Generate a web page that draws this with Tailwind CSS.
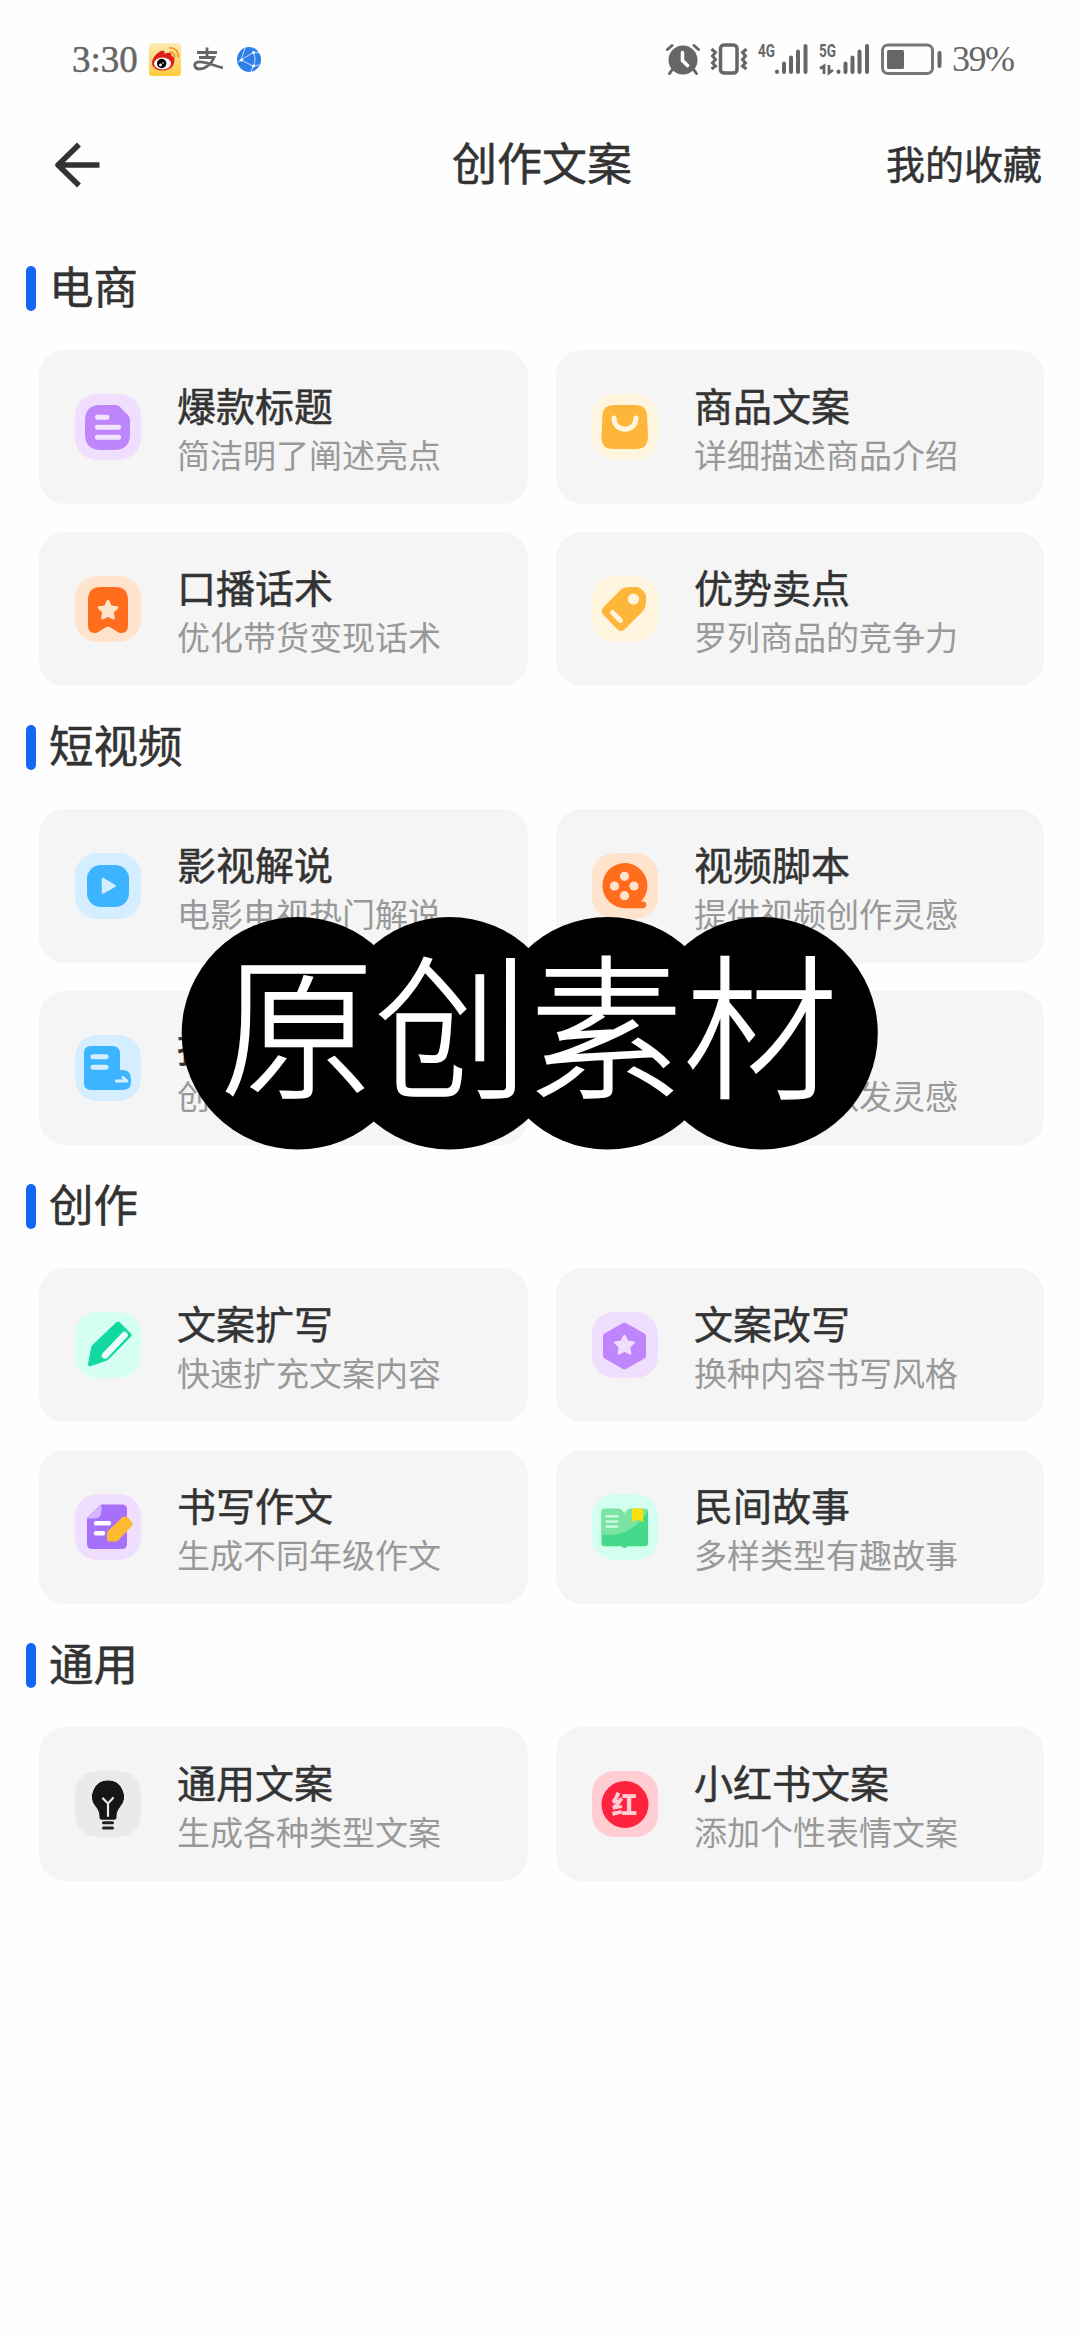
<!DOCTYPE html>
<html lang="zh-CN">
<head>
<meta charset="utf-8">
<title>创作文案</title>
<script src="https://cdn.jsdelivr.net/npm/@tailwindcss/browser@4"></script>
</head>
<body class="relative h-[2339px] w-[1080px] overflow-hidden bg-[#fefefe] font-['Noto_Sans_CJK_SC','Noto_Sans',sans-serif] text-[#333]">

<!-- Status bar -->
<header class="flex h-[116px] items-center justify-between pt-0.5 pr-[66px] pl-[72px] text-[#666]">
  <div class="flex items-center">
    <span class="w-[77px] font-['Liberation_Serif',serif] text-[37px] leading-none [-webkit-text-stroke:0.5px_#666]">3:30</span>
    <svg class="mr-3 h-[33px] w-8" viewBox="0 0 32 33">
      <defs><linearGradient id="wb" x1="0" y1="0" x2="0" y2="1"><stop offset="0" stop-color="#fdeab8"/><stop offset="1" stop-color="#fccb3c"/></linearGradient></defs>
      <rect width="32" height="33" rx="3" fill="url(#wb)"/>
      <path d="M3 20C3 14 11 6 15 8c1 .8.5 2 .5 3 3-2 8-2 7 2 3 1 3.500 3 2.500 7-1 5-7 8-13 7.500C7 27 3 24 3 20z" fill="#dd1f1a"/>
      <ellipse cx="13.500" cy="20.500" rx="8.500" ry="6" fill="#fff"/>
      <circle cx="12.700" cy="20.500" r="4.700" fill="#000"/>
      <circle cx="11.500" cy="22" r="1.400" fill="#fff"/><circle cx="14" cy="20" r=".8" fill="#fff"/>
      <path d="M21 5c5-.5 9 4 8 9M21 9c3 0 5 2 4.500 5" fill="none" stroke="#f59a23" stroke-width="1.800" stroke-linecap="round"/>
    </svg>
    <svg class="mr-3.5 h-6 w-[30px]" viewBox="0 0 30 24" fill="none" stroke="#666" stroke-width="2.800">
      <path d="M4 5.500h20M14 .5v10M6 10.500h15c-2 5-7 11-14.500 11.500C1 22 0 16 5 15c7-1 15 3.500 25 6"/>
    </svg>
    <svg class="h-[25px] w-6" viewBox="0 0 24 25">
      <ellipse cx="12" cy="12.500" rx="12" ry="12.500" fill="#2f7fe9"/>
      <g fill="none" stroke="#fff" stroke-opacity=".8" stroke-width=".9"><path d="M4 13L16 5.500M4 13l12 6M16.500 6c2 4 2 8 0 13M1 15l3-2 4-12M16 5l7 1M16 19l-2 6M16 19l6-1"/></g>
      <g fill="#fff"><circle cx="4.500" cy="13" r="1.500"/><circle cx="16.500" cy="5.500" r="1.500"/><circle cx="16.500" cy="19" r="1.500"/></g>
    </svg>
  </div>
  <div class="flex items-center">
    <svg class="mr-2.5 h-8 w-[34px]" viewBox="0 0 34 32">
      <circle cx="17" cy="17" r="14.500" fill="#666"/>
      <g fill="none" stroke="#666" stroke-width="3" stroke-linecap="round"><path d="M1.500 6.500L6 2.500M32.500 6.500L28 2.500M6 27l-2.500 3.500M28 27l2.500 3.500"/></g>
      <path d="M16.500 9.500v8l5 5" fill="none" stroke="#fefefe" stroke-width="3.600" stroke-linecap="round"/>
    </svg>
    <svg class="mr-2.5 h-8 w-[38px]" viewBox="0 0 38 32" fill="none" stroke="#666">
      <rect x="10.500" y="2" width="16.500" height="28" rx="3.500" stroke-width="3.500"/>
      <path d="M1.500 6l4 3.500-3 3.500 3 3.500-3 3.500 3 3L1.500 26M36.500 6l-4 3.500 3 3.500-3 3.500 3 3.500-3 3 4 3" stroke-width="3"/>
    </svg>
    <svg class="mr-[11px] h-8 w-[50px] overflow-visible" viewBox="0 0 50 32" fill="none" stroke="#666">
      <text x="0" y="14" fill="#666" stroke="none" font-family="Roboto" font-weight="700" font-size="18.500" textLength="17" lengthAdjust="spacingAndGlyphs">4G</text>
      <path d="M19 28.500v.5M26 20.500V29M33 14.500V29M40 8.500V29M47.500 3V29" stroke-width="4" stroke-linecap="round"/>
    </svg>
    <svg class="mr-[11px] h-8 w-[51px] overflow-visible" viewBox="0 0 51 32" fill="none" stroke="#666">
      <text x="0" y="14" fill="#666" stroke="none" font-family="Roboto" font-weight="700" font-size="18.500" textLength="17" lengthAdjust="spacingAndGlyphs">5G</text>
      <path d="M5 31V23l-4 2.500M10 22v8l4-3" stroke-width="2.800"/>
      <path d="M19.500 28.500v.5M26.500 20.500V29M33.500 14.500V29M40.500 8.500V29M48 3V29" stroke-width="4" stroke-linecap="round"/>
    </svg>
    <svg class="mr-2.5 h-8 w-[61px]" viewBox="0 0 61 32">
      <rect x="1.500" y="2" width="50" height="28.500" rx="5.500" fill="none" stroke="#777" stroke-width="3"/>
      <rect x="6" y="7" width="17" height="19" rx="1.500" fill="#666"/>
      <rect x="56.500" y="8" width="4" height="17" rx="2" fill="#666"/>
    </svg>
    <span class="w-[62px] font-['Liberation_Serif',serif] text-[36px] leading-none tracking-[-1.500px]">39%</span>
  </div>
</header>

<!-- Title bar -->
<nav class="grid h-[98px] grid-cols-[1fr_auto_1fr] items-center pr-[50px] pl-[54px]">
  <svg class="size-[46px]" viewBox="0 0 46 46" fill="none" stroke="#333" stroke-width="5.500" stroke-linejoin="round"><path d="M45.500 23H4M25 2.500L4 23 25 43.500"/></svg>
  <h1 class="pb-[7px] text-[45px] leading-none [-webkit-text-stroke:0.5px_#333]">创作文案</h1>
  <a class="-mr-3 justify-self-end pb-[5px] text-[39px] leading-none [-webkit-text-stroke:0.5px_#333]">我的收藏</a>
</nav>

<main>
  <!-- 电商 -->
  <section class="h-[459px] pt-[52px]">
    <h2 class="flex h-[45px] items-center gap-[13px] pl-[26px] text-[44.500px] leading-none [-webkit-text-stroke:0.5px_#333]"><i class="h-[45px] w-2.5 rounded-full bg-[#1467f5]"></i><span class="pb-1.5">电商</span></h2>
    <div class="mt-[39px] grid grid-cols-[489px_488px] gap-x-[28px] gap-y-7 pl-[39px]">
      <article class="flex h-[154px] items-center rounded-[26px] bg-[#f5f5f5] pl-9">
        <svg class="mr-[36px] size-[66px] rounded-[22px] bg-[#efdefe]" viewBox="0 0 66 66"><path d="M25 11h16q3 0 5 3l7 7q2 2 2 5v14q0 16-16 16H26Q10 56 10 40V27Q10 11 25 11z" fill="#be85fd"/><path d="M22.500 23.300H32M22.500 33.300h21M22.500 43.300h21" stroke="#f3e4fe" stroke-width="5" stroke-linecap="round"/></svg>
        <div class="pt-[3px]"><h3 class="text-[39px] leading-[50px] [-webkit-text-stroke:0.5px_#333]">爆款标题</h3><p class="text-[33px] leading-[50px] text-[#999]">简洁明了阐述亮点</p></div>
      </article>
      <article class="flex h-[154px] items-center rounded-[26px] bg-[#f5f5f5] pl-9">
        <svg class="mr-[36px] size-[66px] rounded-[22px] bg-[#fff5de]" viewBox="0 0 66 66"><path d="M22 11h22q10 0 11 10l1 21q0 13-12 13H21Q9 55 9.500 42l1-21Q11 11 22 11z" fill="#fdb63a"/><path d="M22 24c0 15 22 15 22 0" fill="none" stroke="#fff5de" stroke-width="5" stroke-linecap="round"/></svg>
        <div class="pt-[3px]"><h3 class="text-[39px] leading-[50px] [-webkit-text-stroke:0.5px_#333]">商品文案</h3><p class="text-[33px] leading-[50px] text-[#999]">详细描述商品介绍</p></div>
      </article>
      <article class="flex h-[154px] items-center rounded-[26px] bg-[#f5f5f5] pl-9">
        <svg class="mr-[36px] size-[66px] rounded-[22px] bg-[#ffe3cd]" viewBox="0 0 66 66"><path d="M26 11h14q13 0 13 13v25q0 8-6.500 8-2.500 0-4.500-1.500l-6-3.800q-3-2-6 0l-6 3.800Q22 57 19.500 57 13 57 13 49V24Q13 11 26 11z" fill="#ff6d1d"/><path d="M33 25l2.800 5.700 6.300.9-4.600 4.400 1.100 6.300L33 39.400l-5.600 2.900 1.100-6.300-4.600-4.400 6.300-.9z" fill="#ffe3cd" stroke="#ffe3cd" stroke-width="2.500" stroke-linejoin="round"/></svg>
        <div class="pt-[3px]"><h3 class="text-[39px] leading-[50px] [-webkit-text-stroke:0.5px_#333]">口播话术</h3><p class="text-[33px] leading-[50px] text-[#999]">优化带货变现话术</p></div>
      </article>
      <article class="flex h-[154px] items-center rounded-[26px] bg-[#f5f5f5] pl-9">
        <svg class="mr-[36px] size-[66px] rounded-[22px] bg-[#fff5de]" viewBox="0 0 66 66"><path d="M32 12q3-1 7-1h5q4 0 6 3 4 3 4 7v6q0 4-3 8L33 53q-4 4-8 0L11.500 39q-3.500-3.500 0-8L28 14.500q1.500-2 4-2.500z" fill="#fdb63a"/><circle cx="41.500" cy="23" r="5.600" fill="#fff5de"/><path d="M20.500 36.500l8 8" stroke="#fff5de" stroke-width="5" stroke-linecap="round"/></svg>
        <div class="pt-[3px]"><h3 class="text-[39px] leading-[50px] [-webkit-text-stroke:0.5px_#333]">优势卖点</h3><p class="text-[33px] leading-[50px] text-[#999]">罗列商品的竞争力</p></div>
      </article>
    </div>
  </section>

  <!-- 短视频 -->
  <section class="h-[459px] pt-[52px]">
    <h2 class="flex h-[45px] items-center gap-[13px] pl-[26px] text-[44.500px] leading-none [-webkit-text-stroke:0.5px_#333]"><i class="h-[45px] w-2.5 rounded-full bg-[#1467f5]"></i><span class="pb-1.5">短视频</span></h2>
    <div class="mt-[39px] grid grid-cols-[489px_488px] gap-x-[28px] gap-y-7 pl-[39px]">
      <article class="flex h-[154px] items-center rounded-[26px] bg-[#f5f5f5] pl-9">
        <svg class="mr-[36px] size-[66px] rounded-[22px] bg-[#d4edff]" viewBox="0 0 66 66"><rect x="12" y="12" width="42" height="42" rx="14" fill="#3cb4ff"/><path d="M28 26v13.500l11.500-6.700z" fill="#d4edff" stroke="#d4edff" stroke-width="2.500" stroke-linejoin="round"/></svg>
        <div class="pt-[3px]"><h3 class="text-[39px] leading-[50px] [-webkit-text-stroke:0.5px_#333]">影视解说</h3><p class="text-[33px] leading-[50px] text-[#999]">电影电视热门解说</p></div>
      </article>
      <article class="flex h-[154px] items-center rounded-[26px] bg-[#f5f5f5] pl-9">
        <svg class="mr-[36px] size-[66px] rounded-[22px] bg-[#ffe3cd]" viewBox="0 0 66 66"><path d="M33 10a22.700 22.700 0 0 1 16 38.500h2.500a3.400 3.400 0 0 1 0 6.700H33A22.600 22.600 0 0 1 33 10z" fill="#ff6d1d"/><g fill="#ffe3cd"><circle cx="32.500" cy="23.300" r="4.600"/><circle cx="22.500" cy="33" r="4.600"/><circle cx="42" cy="33" r="4.600"/><circle cx="32.500" cy="42.700" r="4.600"/></g></svg>
        <div class="pt-[3px]"><h3 class="text-[39px] leading-[50px] [-webkit-text-stroke:0.5px_#333]">视频脚本</h3><p class="text-[33px] leading-[50px] text-[#999]">提供视频创作灵感</p></div>
      </article>
      <article class="flex h-[154px] items-center rounded-[26px] bg-[#f5f5f5] pl-9">
        <svg class="mr-[36px] size-[66px] rounded-[22px] bg-[#d4edff]" viewBox="0 0 66 66"><path d="M16 11h21q8 0 8 8v16h2q9 0 9 9v3q0 8-9 8H16q-7 0-7-7V18q0-7 7-7z" fill="#3cb4ff"/><path d="M18 21.700h13M18 32.200h13" stroke="#d4edff" stroke-width="5" stroke-linecap="round"/><path d="M40 46h12l-5-4.500" fill="none" stroke="#d4edff" stroke-width="2.800" stroke-linejoin="round"/></svg>
        <div class="pt-[3px]"><h3 class="text-[39px] leading-[50px] [-webkit-text-stroke:0.5px_#333]">拍</h3><p class="text-[33px] leading-[50px] text-[#999]">创</p></div>
      </article>
      <article class="flex h-[154px] items-center rounded-[26px] bg-[#f5f5f5] pl-9">
        <div class="mr-[36px] size-[66px]"></div>
        <div class="pt-[53px] pl-[132px]"><p class="text-[33px] leading-[50px] text-[#999]">激发灵感</p></div>
      </article>
    </div>
  </section>

  <!-- 创作 -->
  <section class="h-[459px] pt-[52px]">
    <h2 class="flex h-[45px] items-center gap-[13px] pl-[26px] text-[44.500px] leading-none [-webkit-text-stroke:0.5px_#333]"><i class="h-[45px] w-2.5 rounded-full bg-[#1467f5]"></i><span class="pb-1.5">创作</span></h2>
    <div class="mt-[39px] grid grid-cols-[489px_488px] gap-x-[28px] gap-y-7 pl-[39px]">
      <article class="flex h-[154px] items-center rounded-[26px] bg-[#f5f5f5] pl-9">
        <svg class="mr-[36px] size-[66px] rounded-[22px] bg-[#d6fff3]" viewBox="0 0 66 66"><path d="M41 10.500q2-2 4 0l11 11q1.500 1.500 0 3L34 47q-1.500 1.500-3.500 2L16 54q-3 1-3-2l3-16q.5-2 2-3.500z" fill="#12d8a2"/><path d="M49.500 23L30 43.500" stroke="#e9fff9" stroke-width="6.500" stroke-linecap="round"/></svg>
        <div class="pt-[3px]"><h3 class="text-[39px] leading-[50px] [-webkit-text-stroke:0.5px_#333]">文案扩写</h3><p class="text-[33px] leading-[50px] text-[#999]">快速扩充文案内容</p></div>
      </article>
      <article class="flex h-[154px] items-center rounded-[26px] bg-[#f5f5f5] pl-9">
        <svg class="mr-[36px] size-[66px] rounded-[22px] bg-[#efdefe]" viewBox="0 0 66 66"><path d="M32.500 13.500L51 24v20L32.500 54.500 14 44V24z" fill="#be85fd" stroke="#be85fd" stroke-width="6" stroke-linejoin="round"/><path d="M32.500 24l2.800 5.700 6.300.9-4.600 4.400 1.100 6.300-5.600-2.900-5.600 2.900L28 35l-4.600-4.400 6.300-.9z" fill="#efdefe" stroke="#efdefe" stroke-width="2.500" stroke-linejoin="round"/></svg>
        <div class="pt-[3px]"><h3 class="text-[39px] leading-[50px] [-webkit-text-stroke:0.5px_#333]">文案改写</h3><p class="text-[33px] leading-[50px] text-[#999]">换种内容书写风格</p></div>
      </article>
      <article class="flex h-[154px] items-center rounded-[26px] bg-[#f5f5f5] pl-9">
        <svg class="mr-[36px] size-[66px] rounded-[22px] bg-[#efdefe]" viewBox="0 0 66 66"><path d="M26 10.500h21q5 0 5 5V50q0 5-5 5H17q-5 0-5-5V24z" fill="#a770fb"/><path d="M26.500 10.500v6q0 8-8 8H12z" fill="#d5b8ff"/><path d="M21 29.300h13M21 39.200h7" stroke="#fff" stroke-width="4.400" stroke-linecap="round"/><path d="M47 23.500q3-2 6 0l3 3.500q3 3 0 6L43 46.500q-1 1-3 1h-6q-2 0-2-2V40q0-2 1-3z" fill="#fdba30"/></svg>
        <div class="pt-[3px]"><h3 class="text-[39px] leading-[50px] [-webkit-text-stroke:0.5px_#333]">书写作文</h3><p class="text-[33px] leading-[50px] text-[#999]">生成不同年级作文</p></div>
      </article>
      <article class="flex h-[154px] items-center rounded-[26px] bg-[#f5f5f5] pl-9">
        <svg class="mr-[36px] size-[66px] rounded-[22px] bg-[#d3fff0]" viewBox="0 0 66 66"><clipPath id="bk"><path d="M12.500 14.700H27q2 0 3 2l2.500 2.500 2.500-2.500q1-2 3-2h15q3 0 3 3v31.500q0 3-3 3H36l-3.500 2-3.500-2H12.500q-3 0-3-3V17.700q0-3 3-3z"/></clipPath><g clip-path="url(#bk)"><path d="M0 0h66v66H0z" fill="#45d98b"/><path d="M0 39q30 6 44-8 7-6 12-14V0H0z" fill="#7de3a2"/></g><path d="M14.500 22.300h11M14.500 27.500h11M14.500 32.700h11" stroke="#d6fbe4" stroke-width="2.200" stroke-linecap="round"/><path d="M40 14.500h11V28l-5.500-2.500L40 28z" fill="#ffdf0a"/></svg>
        <div class="pt-[3px]"><h3 class="text-[39px] leading-[50px] [-webkit-text-stroke:0.5px_#333]">民间故事</h3><p class="text-[33px] leading-[50px] text-[#999]">多样类型有趣故事</p></div>
      </article>
    </div>
  </section>

  <!-- 通用 -->
  <section class="h-[459px] pt-[52px]">
    <h2 class="flex h-[45px] items-center gap-[13px] pl-[26px] text-[44.500px] leading-none [-webkit-text-stroke:0.5px_#333]"><i class="h-[45px] w-2.5 rounded-full bg-[#1467f5]"></i><span class="pb-1.5">通用</span></h2>
    <div class="mt-[39px] grid grid-cols-[489px_488px] gap-x-[28px] gap-y-7 pl-[39px]">
      <article class="flex h-[154px] items-center rounded-[26px] bg-[#f5f5f5] pl-9">
        <svg class="mr-[36px] size-[66px] rounded-[22px] bg-[#eaeaea]" viewBox="0 0 66 66"><path d="M33 9.500a16 16 0 0 1 12 26.500q-3.500 4-3.500 10 0 2.700-2.500 2.700H27q-2.500 0-2.500-2.700 0-6-3.500-10A16 16 0 0 1 33 9.500z" fill="#161616"/><path d="M28 27.500l5 5 5-5.500M33 32.500v12.500" fill="none" stroke="#eaeaea" stroke-width="2.200" stroke-linecap="round"/><path d="M28.500 51.700h9M28.500 57h9" stroke="#222" stroke-width="3" stroke-linecap="round"/></svg>
        <div class="pt-[3px]"><h3 class="text-[39px] leading-[50px] [-webkit-text-stroke:0.5px_#333]">通用文案</h3><p class="text-[33px] leading-[50px] text-[#999]">生成各种类型文案</p></div>
      </article>
      <article class="flex h-[154px] items-center rounded-[26px] bg-[#f5f5f5] pl-9">
        <svg class="mr-[36px] size-[66px] rounded-[22px] bg-[#ffcdd2]" viewBox="0 0 66 66"><circle cx="33" cy="33.500" r="23.500" fill="#ff2340"/><text x="32.500" y="43" text-anchor="middle" font-size="25.500" font-weight="900" fill="#ffcdd2">红</text></svg>
        <div class="pt-[3px]"><h3 class="text-[39px] leading-[50px] [-webkit-text-stroke:0.5px_#333]">小红书文案</h3><p class="text-[33px] leading-[50px] text-[#999]">添加个性表情文案</p></div>
      </article>
    </div>
  </section>
</main>

<!-- Watermark lying over the list -->
<div class="absolute top-[917px] left-[181px] h-[233px] w-[698px]">
  <svg class="absolute inset-0" width="698" height="233" viewBox="0 0 698 233"><circle cx="117" cy="116.300" r="116.300"/><circle cx="268.500" cy="116.300" r="116.300"/><circle cx="426.500" cy="116.300" r="116.300"/><circle cx="580.500" cy="116.300" r="116.300"/></svg>
  <div class="absolute top-[25px] left-[39px] text-[154.500px] leading-[154px] font-light whitespace-nowrap text-white [-webkit-text-stroke:1.500px_#fff]">原创素材</div>
</div>
</body>
</html>
